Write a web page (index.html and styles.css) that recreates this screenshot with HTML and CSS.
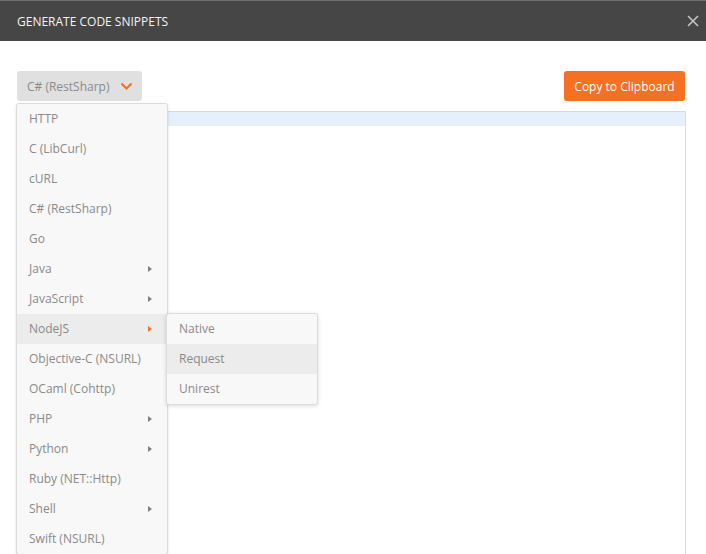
FILE: index.html
```html
<!DOCTYPE html>
<html>
<head>
<meta charset="utf-8">
<link rel="stylesheet" href="styles.css">
</head>
<body>
<div class="modal">
  <div class="header">
    <span class="title">GENERATE CODE SNIPPETS</span>
    <svg class="close" width="12" height="12" viewBox="0 0 12 12"><path d="M1 1L11 11M11 1L1 11" stroke="#c4c4c4" stroke-width="1.6"/></svg>
  </div>
  <div class="body">
    <div class="toolbar">
      <div class="dropdown">
        <button class="select">C# (RestSharp)
          <svg class="chev" width="13" height="9" viewBox="0 0 13 9"><path d="M1.5 1.5L6.5 6.5L11.5 1.5" fill="none" stroke="#f47023" stroke-width="2.2"/></svg>
        </button>
        <ul class="menu">
          <li class="item">HTTP</li>
          <li class="item">C (LibCurl)</li>
          <li class="item">cURL</li>
          <li class="item">C# (RestSharp)</li>
          <li class="item">Go</li>
          <li class="item sub">Java<span class="tri"></span></li>
          <li class="item sub">JavaScript<span class="tri"></span></li>
          <li class="item sub active">NodeJS<span class="tri"></span>
            <ul class="submenu">
              <li class="item">Native</li>
              <li class="item hover">Request</li>
              <li class="item">Unirest</li>
            </ul>
          </li>
          <li class="item">Objective-C (NSURL)</li>
          <li class="item">OCaml (Cohttp)</li>
          <li class="item sub">PHP<span class="tri"></span></li>
          <li class="item sub">Python<span class="tri"></span></li>
          <li class="item">Ruby (NET::Http)</li>
          <li class="item sub">Shell<span class="tri"></span></li>
          <li class="item">Swift (NSURL)</li>
        </ul>
      </div>
      <button class="copy">Copy to Clipboard</button>
    </div>
    <div class="editor">
      <div class="active-line"></div>
    </div>
  </div>
</div>
</body>
</html>
```
FILE: styles.css
```css
html, body {
  margin: 0;
  padding: 0;
  width: 706px;
  height: 554px;
  overflow: hidden;
  background: #ffffff;
  font-family: "Open Sans", "Liberation Sans", sans-serif;
  font-size: 12px;
}
.modal {
  display: flex;
  flex-direction: column;
  height: 554px;
}
.header {
  height: 40px;
  border-top: 1px solid #6e6e6e;
  background: #464646;
  display: flex;
  align-items: center;
  justify-content: space-between;
  padding: 0 7px 0 17px;
  flex-shrink: 0;
}
.title {
  color: #f4f4f4;
  font-size: 12px;
  letter-spacing: 0;
}
.close {
  display: block;
}
.body {
  flex: 1;
  display: flex;
  flex-direction: column;
  padding: 30px 20px 0 16px;
  min-height: 0;
}
.toolbar {
  display: flex;
  justify-content: space-between;
  align-items: flex-start;
  height: 30px;
  flex-shrink: 0;
}
.dropdown {
  position: relative;
  padding-left: 1px;
}
.select {
  height: 30px;
  width: 125px;
  border: none;
  border-radius: 3px;
  background: #e0e0e0;
  color: #8a8a8a;
  font-family: inherit;
  font-size: 12px;
  padding: 0 0 0 10px;
  display: flex;
  align-items: center;
  gap: 10px;
}
.chev {
  display: block;
  margin-top: 1px;
}
.copy {
  height: 30px;
  width: 121px;
  margin-right: 1px;
  border: none;
  border-radius: 3px;
  background: #f47023;
  color: #ffffff;
  font-family: inherit;
  font-size: 12px;
  padding: 0;
}
.menu {
  position: absolute;
  top: 32px;
  left: 0;
  width: 150px;
  margin: 0;
  padding: 0;
  list-style: none;
  background: #f8f8f8;
  border: 1px solid #dcdcdc;
  border-radius: 3px;
  box-shadow: 0 1px 3px rgba(0,0,0,0.12);
  z-index: 5;
}
.item {
  position: relative;
  height: 30px;
  line-height: 30px;
  padding-left: 12px;
  color: #8a8a8a;
  white-space: nowrap;
}
.item.active, .item.hover {
  background: #ececec;
}
.tri {
  position: absolute;
  left: 131px;
  top: 12px;
  width: 0;
  height: 0;
  border-top: 3.5px solid transparent;
  border-bottom: 3.5px solid transparent;
  border-left: 4px solid #808080;
}
.active .tri {
  border-left-color: #f47023;
}
.submenu {
  position: absolute;
  top: -1px;
  left: 149px;
  width: 150px;
  margin: 0;
  padding: 0;
  list-style: none;
  background: #f8f8f8;
  border: 1px solid #dcdcdc;
  border-radius: 3px;
  box-shadow: 0 1px 4px rgba(0,0,0,0.15);
}
.editor {
  margin-top: 10px;
  flex: 1;
  border: 1px solid #dadada;
  border-bottom: none;
  background: #ffffff;
}
.active-line {
  height: 14px;
  background: #e5f0fc;
}
```
